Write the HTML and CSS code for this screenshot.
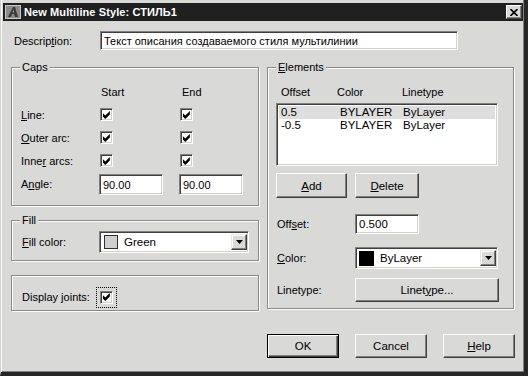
FILE: index.html
```html
<!DOCTYPE html>
<html>
<head>
<meta charset="utf-8">
<title>New Multiline Style</title>
<link rel="stylesheet" href="styles.css">
</head>
<body>
<div class="window">
  <div class="titlebar">
    <svg class="ticon" width="16" height="14" viewBox="0 0 16 14">
      <rect x="0.5" y="0.5" width="15" height="13" fill="#8c8c8c" stroke="#c8c8c8"/>
      <polygon points="3,12 8,2 10,2 13,12 10,12 9,9 7,9 6,12" fill="#3a3a3a"/>
      <polygon points="7.5,7.5 8.5,4.5 9,7.5" fill="#b0b0b0"/>
    </svg>
    <span class="ttext">New Multiline Style: СТИЛЬ1</span>
    <div class="closebtn">
      <svg width="8" height="7" viewBox="0 0 8 7"><path d="M0.5 0 L7.5 7 M7.5 0 L0.5 7" stroke="#000" stroke-width="1.6"/></svg>
    </div>
  </div>

  <div class="content">
    <div class="desc-row">
      <span class="desc-label">Descrip<u>t</u>ion:</span>
      <div class="textbox desc-input">Текст описания создаваемого стиля мультилинии</div>
    </div>

    <div class="main">
      <div class="leftcol">
        <div class="group caps">
          <span class="legend">Caps</span>
          <div class="caps-grid">
            <span></span><span class="hdr hdr-start">Start</span><span class="hdr hdr-end">End</span>
            <span class="lbl"><u>L</u>ine:</span><span class="cb"><svg viewBox="0 0 7 7"><path d="M0 2 L2 4 L6 0 L6 3 L2 7 L0 5 Z"/></svg></span><span class="cb"><svg viewBox="0 0 7 7"><path d="M0 2 L2 4 L6 0 L6 3 L2 7 L0 5 Z"/></svg></span>
            <span class="lbl"><u>O</u>uter arc:</span><span class="cb"><svg viewBox="0 0 7 7"><path d="M0 2 L2 4 L6 0 L6 3 L2 7 L0 5 Z"/></svg></span><span class="cb"><svg viewBox="0 0 7 7"><path d="M0 2 L2 4 L6 0 L6 3 L2 7 L0 5 Z"/></svg></span>
            <span class="lbl">Inne<u>r</u> arcs:</span><span class="cb"><svg viewBox="0 0 7 7"><path d="M0 2 L2 4 L6 0 L6 3 L2 7 L0 5 Z"/></svg></span><span class="cb"><svg viewBox="0 0 7 7"><path d="M0 2 L2 4 L6 0 L6 3 L2 7 L0 5 Z"/></svg></span>
            <span class="lbl lbl-angle">A<u>n</u>gle:</span><div class="textbox angle">90.00</div><div class="textbox angle">90.00</div>
          </div>
        </div>

        <div class="group fill">
          <span class="legend">Fill</span>
          <div class="prow">
            <span class="fill-label"><u>F</u>ill color:</span>
            <div class="combo fill-combo">
              <span class="swatch swatch-gray"></span>
              <span class="combo-text">Green</span>
              <span class="arrowbtn"><svg width="7" height="4" viewBox="0 0 7 4"><polygon points="0,0 7,0 3.5,4" fill="#000"/></svg></span>
            </div>
          </div>
        </div>

        <div class="group joints">
          <div class="jrow">
            <span class="joints-label">Display joints:</span>
            <span class="focus"><span class="cb"><svg viewBox="0 0 7 7"><path d="M0 2 L2 4 L6 0 L6 3 L2 7 L0 5 Z"/></svg></span></span>
          </div>
        </div>
      </div>

      <div class="group elements">
        <span class="legend"><u>E</u>lements</span>
        <div class="el-head">
          <span class="c1">Offset</span><span class="c2">Color</span><span>Linetype</span>
        </div>
        <div class="listbox">
          <div class="lrow selected"><span class="r1">0.5</span><span class="r2">BYLAYER</span><span>ByLayer</span></div>
          <div class="lrow"><span class="r1">-0.5</span><span class="r2">BYLAYER</span><span>ByLayer</span></div>
        </div>
        <div class="el-buttons">
          <div class="btn btn-add"><u>A</u>dd</div>
          <div class="btn btn-del"><u>D</u>elete</div>
        </div>
        <div class="prop prop-offset">
          <span class="plabel">Off<u>s</u>et:</span>
          <div class="textbox offset-input">0.500</div>
        </div>
        <div class="prop prop-color">
          <span class="plabel"><u>C</u>olor:</span>
          <div class="combo color-combo">
            <span class="swatch swatch-black"></span>
            <span class="combo-text">ByLayer</span>
            <span class="arrowbtn"><svg width="7" height="4" viewBox="0 0 7 4"><polygon points="0,0 7,0 3.5,4" fill="#000"/></svg></span>
          </div>
        </div>
        <div class="prop prop-ltype">
          <span class="plabel">Linetype:</span>
          <div class="btn ltype-btn">Linet<u>y</u>pe...</div>
        </div>
      </div>
    </div>

    <div class="bottom-buttons">
      <div class="btn btn-ok">OK</div>
      <div class="btn">Cancel</div>
      <div class="btn"><u>H</u>elp</div>
    </div>
  </div>
</div>
</body>
</html>
```

FILE: styles.css
```css
* { box-sizing: border-box; }
html, body { margin: 0; padding: 0; }
body {
  width: 528px;
  height: 376px;
  overflow: hidden;
  font-family: "Liberation Sans", Arial, sans-serif;
  font-size: 11px;
  color: #000;
  background: #d9d9d7;
}
u { text-decoration: underline; text-underline-offset: 1px; text-decoration-thickness: 1px; }

.window {
  width: 528px;
  height: 376px;
  background: #d9d9d7;
  border-left: 1px solid #cfcfcf;
  border-right: 4px solid #262626;
  border-bottom: 4px solid #262626;
  box-shadow: inset 1px 0 #fff, inset -1px -1px #808080;
  padding-top: 3px;
  display: flex;
  flex-direction: column;
}

/* Title bar */
.titlebar {
  height: 18px;
  margin: 0 1px 0 2px;
  background: #202020;
  display: flex;
  align-items: center;
  padding: 0 1px 0 2px;
}
.ticon { display: block; flex: none; }
.ttext {
  margin-left: 3px;
  color: #fff;
  font-weight: bold;
  font-size: 11px;
  letter-spacing: 0.1px;
  flex: 1;
  white-space: nowrap;
}
.closebtn {
  width: 16px;
  height: 14px;
  background: #d9d9d7;
  border: 1px solid;
  border-color: #fff #404040 #404040 #fff;
  box-shadow: inset -1px -1px #808080;
  display: flex;
  align-items: center;
  justify-content: center;
  flex: none;
}
.closebtn svg { display: block; }

/* Content */
.content { padding-left: 10px; }

.desc-row {
  margin-top: 10px;
  display: flex;
  align-items: center;
  height: 19px;
}
.desc-label { margin-left: 3px; width: 86px; }

.textbox {
  background: #fff;
  border: 1px solid;
  border-color: #808080 #fff #fff #808080;
  box-shadow: inset 1px 1px #404040, inset -1px -1px #d4d0c8;
  padding-left: 3px;
  display: flex;
  align-items: center;
  white-space: nowrap;
}
.desc-input { width: 358px; height: 19px; font-size: 11px; }

.main {
  margin-top: 17px;
  display: flex;
  gap: 8px;
  width: 503px;
  height: 244px;
}
.leftcol {
  width: 248px;
  display: flex;
  flex-direction: column;
}

.group {
  position: relative;
  border: 1px solid #8a8a8a;
  box-shadow: inset 1px 1px #fff, 1px 1px #fff;
}
.legend {
  position: absolute;
  top: -7px;
  left: 8px;
  padding: 0 2px;
  background: #d9d9d7;
  line-height: 13px;
}

/* Caps */
.caps { height: 139px; padding: 17px 0 0 9px; }
.caps-grid {
  display: grid;
  grid-template-columns: 79px 80px 64px;
  grid-template-rows: 18px 23px 23px 23px 23px;
  align-items: center;
}
.hdr { align-self: start; line-height: 14px; }
.hdr-start { padding-left: 1px; }
.hdr-end { padding-left: 2px; }
.lbl-angle { align-self: end; line-height: 21px; }
.angle { align-self: end; width: 64px; height: 21px; margin-left: -1px; }

.cb {
  width: 13px;
  height: 13px;
  background: #fff;
  border: 1px solid;
  border-color: #808080 #fff #fff #808080;
  box-shadow: inset 1px 1px #404040, inset -1px -1px #d4d0c8;
  display: flex;
  align-items: center;
  justify-content: center;
}
.cb svg { width: 8px; height: 8px; display: block; fill: #000; }

/* Fill */
.fill { margin-top: 14px; height: 41px; padding: 10px 0 0 10px; }
.prow { display: flex; align-items: center; height: 22px; }
.fill-label { width: 77px; }

.combo {
  height: 22px;
  background: #fff;
  border: 1px solid;
  border-color: #808080 #fff #fff #808080;
  box-shadow: inset 1px 1px #404040, inset -1px -1px #d4d0c8;
  display: flex;
  align-items: center;
  padding: 2px 1px 2px 4px;
}
.fill-combo { width: 150px; }
.swatch { width: 14px; height: 14px; border: 1px solid #000; flex: none; }
.swatch-gray { background: #cfcfcf; border-color: #303030; }
.swatch-black { background: #000; width: 15px; height: 15px; }
.combo-text { margin-left: 6px; flex: 1; white-space: nowrap; font-size: 11.5px; }
.arrowbtn {
  width: 16px;
  height: 100%;
  background: #d9d9d7;
  border: 1px solid;
  border-color: #e8e8e8 #404040 #404040 #e8e8e8;
  box-shadow: inset -1px -1px #808080, inset 1px 1px #fff;
  display: flex;
  align-items: center;
  justify-content: center;
  flex: none;
}
.arrowbtn svg { display: block; }

/* Display joints */
.joints { margin-top: 14px; height: 36px; padding: 11px 0 0 10px; }
.jrow { display: flex; align-items: center; height: 20px; }
.joints-label { width: 78px; }
.focus { display: flex; outline: 1px dotted #000; outline-offset: 3px; }

/* Elements */
.elements { width: 247px; height: 242px; padding: 17px 0 0 8px; }
.el-head { height: 14px; line-height: 14px; padding-left: 5px; display: flex; }
.el-head .c1 { width: 56px; }
.el-head .c2 { width: 65px; }
.listbox {
  margin-top: 4px;
  width: 222px;
  height: 63px;
  background: #fff;
  border: 1px solid;
  border-color: #808080 #fff #fff #808080;
  box-shadow: inset 1px 1px #404040, inset -1px -1px #d4d0c8;
  padding: 2px 2px;
}
.lrow {
  height: 13px;
  line-height: 13px;
  padding-left: 2px;
  display: flex;
  font-size: 11.5px;
}
.lrow.selected { background: #dedede; }
.lrow .r1 { width: 59px; }
.lrow .r2 { width: 63px; }

.btn {
  background: #d9d9d7;
  border: 1px solid;
  border-color: #fff #404040 #404040 #fff;
  box-shadow: inset -1px -1px #808080;
  display: flex;
  align-items: center;
  justify-content: center;
  white-space: nowrap;
  font-size: 11.5px;
}
.el-buttons { margin-top: 7px; display: flex; gap: 8px; height: 25px; }
.btn-add { width: 71px; }
.btn-del { width: 64px; }

.prop { display: flex; align-items: center; }
.plabel { width: 79px; padding-left: 1px; }
.prop-offset { margin-top: 16px; height: 20px; }
.offset-input { width: 64px; height: 20px; font-size: 11.5px; }
.prop-color { margin-top: 13px; height: 22px; }
.color-combo { width: 143px; padding-left: 3px; }
.prop-ltype { margin-top: 9px; height: 24px; }
.ltype-btn { width: 144px; height: 24px; }

/* Bottom buttons */
.bottom-buttons {
  margin-top: 23px;
  width: 504px;
  display: flex;
  justify-content: flex-end;
  gap: 16px;
  height: 24px;
}
.bottom-buttons .btn { width: 72px; height: 24px; }
.btn-ok {
  border: 1px solid #000;
  box-shadow: inset 1px 1px #fff, inset -1px -1px #404040, inset -2px -2px #808080;
}
```
